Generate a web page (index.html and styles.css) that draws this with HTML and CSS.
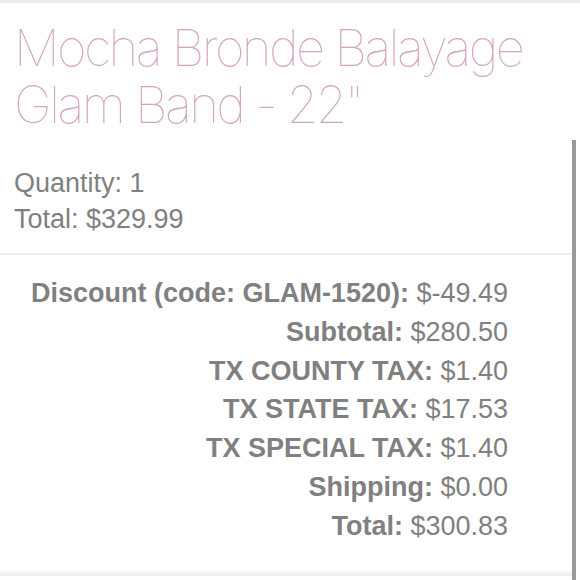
FILE: index.html
```html
<!DOCTYPE html>
<html>
<head>
<meta charset="utf-8">
<link rel="stylesheet" href="styles.css">
</head>
<body>
<div class="page">
  <div class="item">
    <h1 class="title">Mocha Bronde Balayage Glam Band - 22"</h1>
    <div class="meta">
      <div>Quantity: 1</div>
      <div>Total: $329.99</div>
    </div>
  </div>
  <div class="summary">
    <div class="row"><b>Discount (code: GLAM-1520):</b> $-49.49</div>
    <div class="row"><b>Subtotal:</b> $280.50</div>
    <div class="row"><b>TX COUNTY TAX:</b> $1.40</div>
    <div class="row"><b>TX STATE TAX:</b> $17.53</div>
    <div class="row"><b>TX SPECIAL TAX:</b> $1.40</div>
    <div class="row"><b>Shipping:</b> $0.00</div>
    <div class="row"><b>Total:</b> $300.83</div>
  </div>
  <div class="scrollbar"></div>
</div>
</body>
</html>
```
FILE: styles.css
```css
html, body {
  margin: 0;
  padding: 0;
  background: #fff;
}
.page {
  position: relative;
  width: 580px;
  height: 580px;
  overflow: hidden;
  box-sizing: border-box;
  border-top: 3px solid #ececec;
  font-family: "Liberation Sans", Arial, sans-serif;
  color: #808080;
}
.item {
  padding: 16px 14px 0 14px;
  border-bottom: 2px solid #eeeeee;
  margin-right: 8px;
}
.title {
  margin: 0;
  font-family: Inter, "Open Sans", sans-serif;
  font-weight: 100;
  font-size: 51px;
  line-height: 57px;
  color: #d5a3c1;
  letter-spacing: -2.6px;
  width: 540px;
}
.meta {
  padding: 32px 0 16px 0;
  font-size: 27px;
  line-height: 36px;
}
.summary {
  padding: 19px 72px 0 0;
  text-align: right;
  font-size: 27px;
  line-height: 38.8px;
}
.summary b {
  font-weight: bold;
}
.scrollbar {
  position: absolute;
  right: 4px;
  top: 137px;
  bottom: 0;
  width: 4px;
  background: #9a9a9a;
}
.page::after {
  content: "";
  position: absolute;
  left: 0;
  right: 8px;
  bottom: 4px;
  height: 6px;
  background: linear-gradient(#ffffff, #ececec);
}
```
